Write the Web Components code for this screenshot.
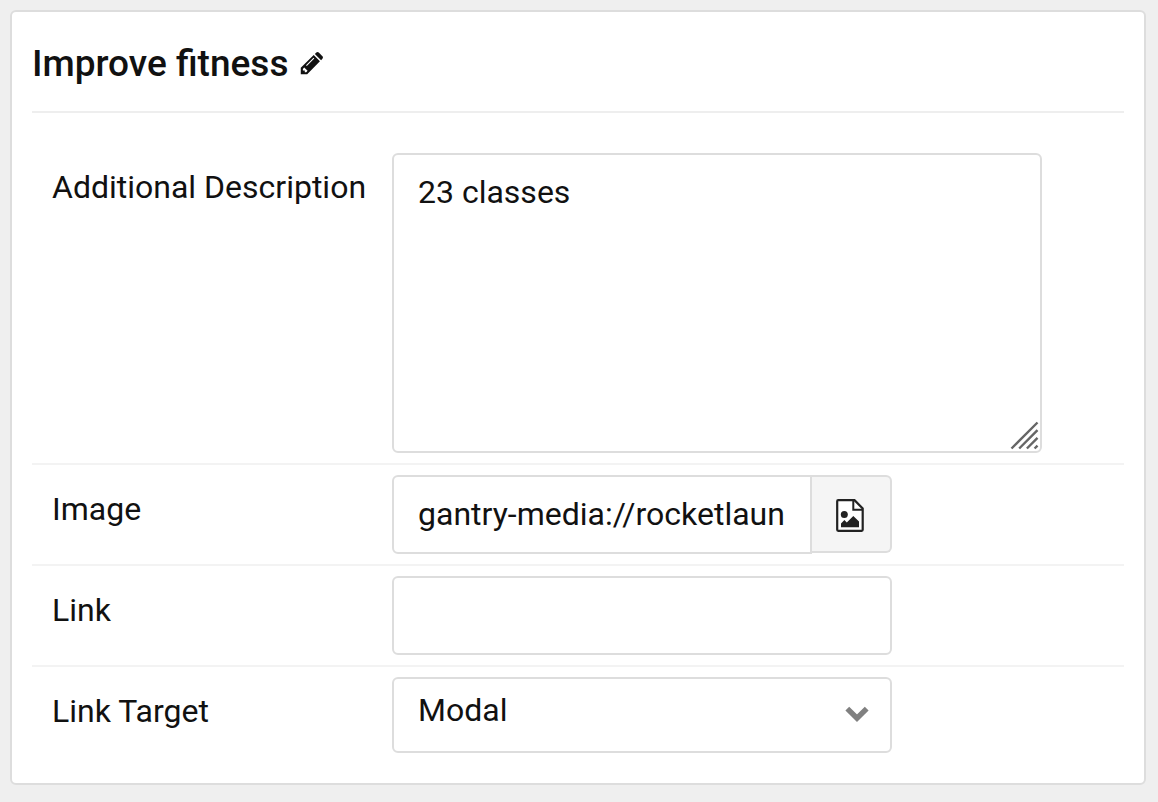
<!DOCTYPE html>
<html lang="en">
<head>
<meta charset="utf-8">
<meta name="viewport" content="width=device-width, initial-scale=1">
<title>Improve fitness</title>
<style>
  body {
    margin: 0;
    padding: 10px 12px 16px 10px;
    background: #efefef;
    color: #111;
    font-family: Roboto, "Liberation Sans", sans-serif;
    font-size: 32px;
    --edge: #ddd;
    --rule: #f3f3f3;
  }
</style>
</head>
<body>
<settings-card>
  <card-title slot="title">Improve fitness</card-title>
  <area-field label="Additional Description" value="23 classes" first></area-field>
  <media-field label="Image" value="gantry-media://rocketlaun"></media-field>
  <text-field label="Link"></text-field>
  <select-field label="Link Target" options="Modal"></select-field>
</settings-card>

<script>
class SettingsCard extends HTMLElement {
  constructor() {
    super();
    this.attachShadow({ mode: 'open' }).innerHTML = `
      <style>
        :host { display: block; box-sizing: border-box; background: #fff;
          border: 2px solid var(--edge); border-radius: 6px; padding: 0 20px 20px; }
        header { padding: 26px 0 22px; border-bottom: 2px solid #eee; margin-bottom: 30px; }
      </style>
      <header><slot name="title"></slot></header>
      <slot></slot>`;
  }
}

class CardTitle extends HTMLElement {
  constructor() {
    super();
    this.attachShadow({ mode: 'open' }).innerHTML = `
      <style>
        :host { display: flex; align-items: center; gap: 12px; }
        h2 { margin: 0; font-size: 37px; line-height: 51px; font-weight: 500; }
        button { display: flex; padding: 0; border: 0; background: none; color: inherit; cursor: pointer; }
        svg { display: block; }
      </style>
      <h2><slot></slot></h2>
      <button type="button" aria-label="Edit title">
        <svg width="23" height="23" viewBox="0 0 24 24" fill="currentColor">
          <path fill-rule="evenodd" d="M.8 16.500 14.300 3.200l6.500 6.500L7.500 23.200H.8zM3 17.800v1.400h2V21h1.500l1.400-1.400-3.500-3.300zM14.100 6.100 6.300 13.900l.8.800 7.800-7.800z"/>
          <path d="m15.500 2 1.500-1.400q1.300-1.100 2.600 0l3.800 3.800q1.100 1.300 0 2.600L22 8.500z"/>
        </svg>
      </button>`;
  }
}

/* Shared row: a label on the left and a control on the right. */
class FieldRow extends HTMLElement {
  constructor() {
    super();
    this.attachShadow({ mode: 'open' });
  }
  connectedCallback() {
    this.shadowRoot.innerHTML = `
      <style>
        :host { display: grid; grid-template-columns: 340px minmax(0, 1fr); align-items: start;
          padding: 10px 20px; border-top: 2px solid var(--rule); }
        :host([first]) { border-top: 0; }
        label { padding-top: 10px; line-height: 48px; }
        .control { position: relative; display: flex; align-items: flex-start; max-width: 500px; }
        input, textarea, select { box-sizing: border-box; display: block; flex: 1; min-width: 0; width: 100%;
          margin: 0; padding: 0 24px 2px; border: 2px solid var(--edge); border-radius: 6px;
          background: #fff; color: inherit; font: inherit; outline: 0; }
        input { height: 79px; }
        ${this.styles()}
      </style>
      <label for="control"></label>
      <div class="control">${this.control()}</div>`;
    this.shadowRoot.querySelector('label').textContent = this.getAttribute('label');
    const field = this.shadowRoot.getElementById('control');
    if (this.hasAttribute('value')) field.value = this.getAttribute('value');
  }
  styles() { return ''; }
  control() { return '<input id="control" type="text">'; }
}

class TextField extends FieldRow {}

class AreaField extends FieldRow {
  styles() {
    return `
      .control { max-width: 650px; }
      textarea { height: 300px; padding: 14px 24px; line-height: 46px; resize: none; }
      svg { position: absolute; right: 2px; bottom: 2px; pointer-events: none; }`;
  }
  control() {
    return `<textarea id="control"></textarea>
      <svg width="30" height="30" viewBox="0 0 30 30" fill="none" stroke="#666" stroke-width="2.400">
        <path d="M1.500 27.500 27.500 1.500M9.200 27.500 27.500 9.200M16.900 27.500 27.500 16.900M24.600 27.500 27.500 24.600"/>
      </svg>`;
  }
}

class MediaField extends FieldRow {
  styles() {
    return `
      input { border-radius: 6px 0 0 6px; }
      button { box-sizing: border-box; display: flex; align-items: center; justify-content: center;
        width: 80px; height: 78px; padding: 3px 2px 0 0; border: 2px solid var(--edge); border-left: 0;
        border-radius: 0 6px 6px 0; background: #f5f5f5; color: #222; cursor: pointer; }`;
  }
  control() {
    return `<input id="control" type="text">
      <button type="button" aria-label="Choose image">
        <svg width="28" height="33" viewBox="0 0 28 33">
          <path d="M2.200 1.200H18.500L26.700 9.500V30.800q0 1-1 1H2.200q-1 0-1-1V2.200q0-1 1-1z" fill="#fff" stroke="currentColor" stroke-width="2.200"/>
          <path d="M17.300 1v9.700H27" fill="none" stroke="currentColor" stroke-width="2"/>
          <circle cx="8.300" cy="15.500" r="3.500" fill="currentColor"/>
          <path d="M5 28.200v-3.800l3.400-3.400 2.400 2.400 6.500-6.500 5.700 5.700v5.600z" fill="currentColor"/>
        </svg>
      </button>`;
  }
}

class SelectField extends FieldRow {
  styles() {
    return `
      select { appearance: none; height: 76px; padding: 0 64px 10px 24px; }
      svg { position: absolute; right: 23px; top: 29px; pointer-events: none; }`;
  }
  control() {
    const options = this.getAttribute('options').split(',').map(o => `<option>${o}</option>`).join('');
    return `<select id="control">${options}</select>
      <svg width="24" height="16" viewBox="0 0 24 16" fill="none" stroke="#808080" stroke-width="5.400">
        <path d="M2.300 2.600 12 12.200 21.700 2.600" stroke-linejoin="miter"/>
      </svg>`;
  }
}

customElements.define('settings-card', SettingsCard);
customElements.define('card-title', CardTitle);
customElements.define('area-field', AreaField);
customElements.define('media-field', MediaField);
customElements.define('text-field', TextField);
customElements.define('select-field', SelectField);
</script>
</body>
</html>
